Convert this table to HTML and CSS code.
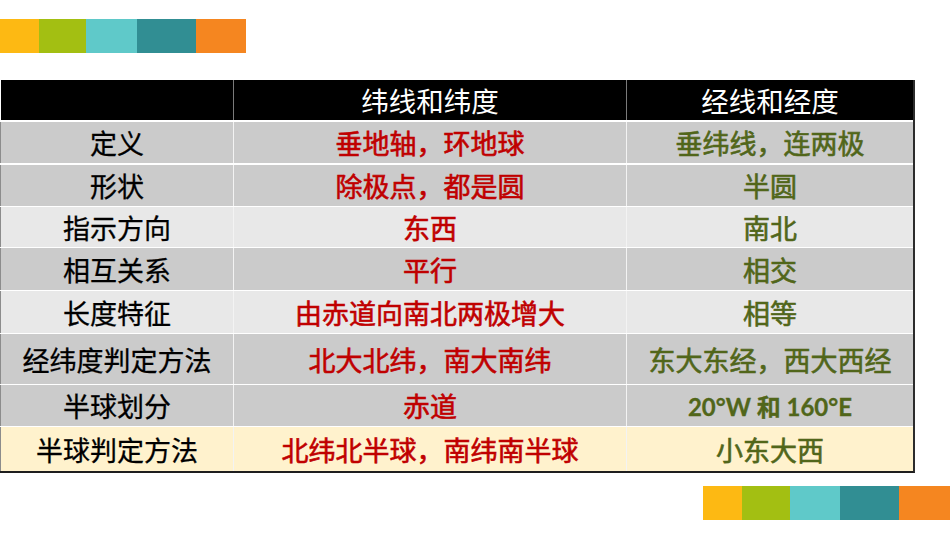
FILE: index.html
```html
<!DOCTYPE html>
<html lang="zh-CN">
<head>
<meta charset="utf-8">
<title>纬线和经线</title>
<link rel="stylesheet" href="styles.css">
</head>
<body>
<div class="page">
  <div class="stripe stripe-top">
    <span class="seg s1"></span><span class="seg s2"></span><span class="seg s3"></span><span class="seg s4"></span><span class="seg s5"></span>
  </div>

  <div class="table">
    <div class="row head">
      <div class="cell"></div>
      <div class="cell">纬线和纬度</div>
      <div class="cell">经线和经度</div>
    </div>
    <div class="row dark r1">
      <div class="cell">定义</div>
      <div class="cell red">垂地轴，环地球</div>
      <div class="cell green">垂纬线，连两极</div>
    </div>
    <div class="row dark r2">
      <div class="cell">形状</div>
      <div class="cell red">除极点，都是圆</div>
      <div class="cell green">半圆</div>
    </div>
    <div class="row light r3">
      <div class="cell">指示方向</div>
      <div class="cell red">东西</div>
      <div class="cell green">南北</div>
    </div>
    <div class="row dark r4">
      <div class="cell">相互关系</div>
      <div class="cell red">平行</div>
      <div class="cell green">相交</div>
    </div>
    <div class="row light r5">
      <div class="cell">长度特征</div>
      <div class="cell red">由赤道向南北两极增大</div>
      <div class="cell green">相等</div>
    </div>
    <div class="row dark r6">
      <div class="cell">经纬度判定方法</div>
      <div class="cell red">北大北纬，南大南纬</div>
      <div class="cell green">东大东经，西大西经</div>
    </div>
    <div class="row dark r7">
      <div class="cell">半球划分</div>
      <div class="cell red">赤道</div>
      <div class="cell green latin">20°W 和 160°E</div>
    </div>
    <div class="row cream r8">
      <div class="cell">半球判定方法</div>
      <div class="cell red">北纬北半球，南纬南半球</div>
      <div class="cell green">小东大西</div>
    </div>
  </div>

  <div class="stripe stripe-bottom">
    <span class="seg b1"></span><span class="seg b2"></span><span class="seg b3"></span><span class="seg b4"></span><span class="seg b5"></span>
  </div>
</div>
</body>
</html>
```

FILE: styles.css
```css
html, body {
  margin: 0;
  padding: 0;
  background: #ffffff;
}

.page {
  width: 950px;
  height: 535px;
  overflow: hidden;
  display: flex;
  flex-direction: column;
  font-family: "Noto Sans CJK SC", "Noto Sans", sans-serif;
}

.stripe {
  display: flex;
  height: 34px;
}

.stripe-top {
  margin-top: 19px;
  width: 246px;
}

.stripe-bottom {
  margin-top: 13px;
  margin-left: auto;
  width: 247px;
}

.seg { display: block; height: 100%; }
.s1 { width: 39px; background: #fdb913; }
.s2 { width: 47px; background: #a3bf12; }
.s3 { width: 51px; background: #5fc9c9; }
.s4 { width: 59px; background: #318e93; }
.s5 { width: 50px; background: #f58620; }

.b1 { width: 39px; background: #fdb913; }
.b2 { width: 48px; background: #a3bf12; }
.b3 { width: 50px; background: #5fc9c9; }
.b4 { width: 59px; background: #318e93; }
.b5 { width: 51px; background: #f58620; }

.table {
  margin-top: 27px;
  width: 913px;
  border-right: 2px solid #2c2c2c;
  border-bottom: 2px solid #1e1e1e;
  display: flex;
  flex-direction: column;
  gap: 1px;
}

.row {
  display: grid;
  grid-template-columns: 232px 392px 1fr;
  column-gap: 1px;
  background: #f3f3f3;
  border-left: 1px solid #8c8c8c;
}

.row.head {
  background: #7a7a7a;
  border-left: 0;
  padding-left: 1px;
  background-clip: content-box;
}

.head { height: 40px; margin-bottom: 1px; }
.r1 { height: 41px; margin-bottom: 1px; }
.r2 { height: 41px; }
.r3 { height: 40px; }
.r4 { height: 42px; }
.r5 { height: 42px; }
.r6 { height: 50px; }
.r7 { height: 41px; }
.r8 { height: 44px; }

.cell {
  display: flex;
  align-items: center;
  justify-content: center;
  font-size: 27px;
  color: #000000;
  white-space: nowrap;
  -webkit-text-stroke: 0.3px currentColor;
}

.head .cell { background: #000000; color: #ffffff; font-size: 27.5px; -webkit-text-stroke: 0; }
.dark .cell { background: #cbcbcb; }
.light .cell { background: #e8e8e8; }
.cream .cell { background: #fff2cd; }

.cell.red { color: #c00000; -webkit-text-stroke: 0.6px currentColor; }
.cell.green { color: #51661a; -webkit-text-stroke: 0.6px currentColor; }

.cell.latin {
  font-family: "Lato", "Noto Sans CJK SC", sans-serif;
  font-weight: 700;
  font-size: 24px;
  -webkit-text-stroke: 0.3px currentColor;
}
```
